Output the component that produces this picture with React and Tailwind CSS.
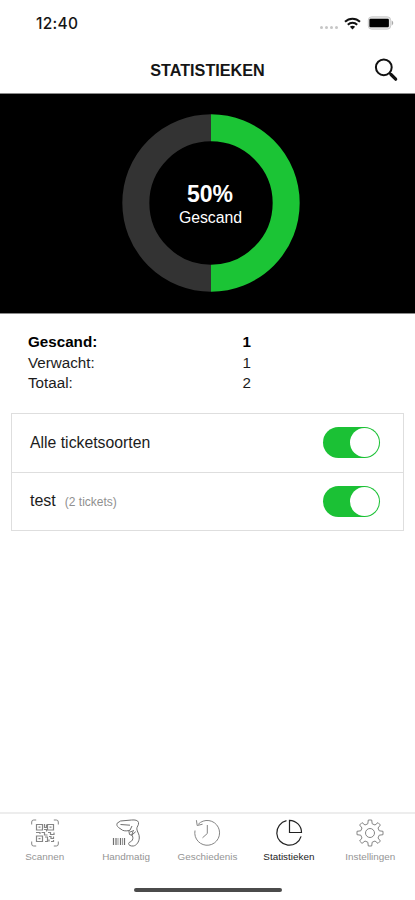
import React from 'react';

const stats = [
  { label: 'Gescand:', value: 1, bold: true },
  { label: 'Verwacht:', value: 1 },
  { label: 'Totaal:', value: 2 },
];

function StatusBar() {
  return (
    <div className="flex h-[46px] items-center pl-[36px] pr-[21px]">
      <span className="pt-[1px] font-[Inter,sans-serif] text-[15.500px] leading-[20px] font-medium tracking-[0.300px] text-[#151515]">12:40</span>
      <div className="ml-auto flex h-4 items-center">
        <div className="mt-[8px] mr-[6px] flex gap-[2px]">
          {[0, 1, 2, 3].map((n) => (
            <i key={n} className="h-[3px] w-[3px] rounded-full bg-[#c6c6c6]" />
          ))}
        </div>
        <svg width="17" height="13" viewBox="0 0 17 13" fill="none" stroke="#111" strokeWidth="2">
          <path d="M1 4.700C5.200.6 11.800.6 16 4.700" />
          <path d="M3.800 7.700c2.700-2.600 6.700-2.600 9.400 0" />
          <path d="M5.900 9.700c1.500-1.400 3.700-1.400 5.200 0L8.500 12.500z" fill="#111" stroke="none" />
        </svg>
        <svg className="ml-[6px]" width="27" height="14" viewBox="0 0 27 14">
          <rect x="1.300" y=".8" width="22.400" height="12.400" rx="3.400" fill="#e4e4e4" stroke="#cecece" />
          <rect x="2.400" y="2.700" width="19.500" height="8.600" rx="1.200" fill="#000" />
          <path d="M24.700 4.600c2 .8 2 4 0 4.800z" fill="#aaa" />
        </svg>
      </div>
    </div>
  );
}

function Donut() {
  return (
    <div className="grid h-[221px] place-items-center border-y border-[#8a8a8a] bg-black pb-[1px] pl-[7px]">
      <div className="grid place-items-center">
        <svg className="col-start-1 row-start-1" width="178" height="178" viewBox="0 0 178 178" fill="none" strokeWidth="27">
          <path d="M89 164.200a75.200 75.200 0 0 1 0-150.400" stroke="#333" />
          <path d="M89 13.800a75.200 75.200 0 0 1 0 150.400" stroke="#1bc435" />
        </svg>
        <div className="col-start-1 row-start-1 mt-[4px] mr-[1px] text-center text-white">
          <div className="mr-[1px] text-[23px] leading-[26px] font-bold">50%</div>
          <div className="text-[15.800px] leading-[22px]">Gescand</div>
        </div>
      </div>
    </div>
  );
}

function Toggle() {
  return (
    <div className="flex h-[31px] w-[57px] items-center justify-end rounded-full bg-[#1bc135] pr-[1px]">
      <span className="h-[29px] w-[29px] rounded-full bg-white" />
    </div>
  );
}

function ScanIcon() {
  return (
    <svg width="28" height="28" viewBox="0 0 28 28" fill="none" stroke="#858585">
      <path d="M.700 5.500V3Q.700 1 2.700 1h2.500M22.800 1h2.500q2 0 2 2v2.500M27.300 22.500V25q0 2-2 2h-2.500M5.200 27H2.700q-2 0-2-2v-2.500" />
      <path strokeWidth="1.200" d="M5.500 5.500h6v5.500h-6zM16.500 5.500h6v5.500h-6zM5.500 17h6v5.500h-6zM7.500 8.200h2M18.500 8.200h2M7.500 19.700h2M13.500 5v3.500h2v-3M13 10.500h2.500v2M5 13.500h4v1.500M10.500 13.500h3v2.500h3M17 13.500h2.500v2H23v-2M14 18h2.500v4.500H14M18 17.500h2v2h2.500v-2M18 22.500v-2M20 22.500h2.500v-1.500" />
    </svg>
  );
}

function ScannerIcon() {
  return (
    <svg width="29" height="28" viewBox="0 0 29 28" fill="none" stroke="#6f6f6f" strokeLinejoin="round">
      <path d="M5.200 4.200 8.500 2 19.500 1c3.500-.3 6.500.2 7 2.500.6 2.600-1.900 4.200-1.700 6.400.2 2.800 2.900 5.400 2.500 9.100-.3 3.800-2.600 7.500-6 8-2.500.3-4.900-.8-4.700-2.500.2-1.600 2.900-1.500 3.800-3.500.9-2.200.5-3.500-.7-5.200" />
      <path d="M5.200 4.200c-.8 1.700-.1 3 1.300 4.300l4 2.700c2.200 1 5.200.8 7.500 0l2-4.200M8.500 5.500l9.500.7M16.800 11.500l.7 4 2.200.7 4-3.500M18 13l4-1.500M19.700 16.200l1.300-3.700" />
      <path d="M1.500 19v7M4 19v7M8.500 19v7M12.500 19v7" strokeWidth="1.200" />
      <path d="M6 19v7M10.500 19v7" strokeWidth=".7" />
    </svg>
  );
}

function HistoryIcon() {
  return (
    <svg width="28" height="28" viewBox="0 0 28 28" fill="none" stroke="#858585">
      <path d="M5.200 5.300A12.400 12.400 0 1 1 2 11.500" />
      <path d="M3.400 1.200 4.200 6.500 9.600 5.200M14.300 6v8.500l-4.800 4.300" />
    </svg>
  );
}

function PieIcon() {
  return (
    <svg width="28" height="28" viewBox="0 0 28 28" fill="none" stroke="#222" strokeWidth="1.200">
      <path d="M11.500 1.700a12.400 12.400 0 1 0 14.600 15.600" />
      <path d="M14.500 1.300v12.200h12A12.200 12.200 0 0 0 14.500 1.300z" />
    </svg>
  );
}

function GearIcon() {
  return (
    <svg width="28" height="28" viewBox="0 0 28 28" fill="none" stroke="#858585" strokeLinejoin="round">
      <circle cx="14" cy="14" r="4.500" />
      <path d="M11.800 4.800 12.300 1h3.400l.5 3.800 2.800 1.200 3-2.400L24.400 6 22 9l1.200 2.800 3.800.5v3.400l-3.800.5L22 19l2.400 3-2.400 2.400-3-2.400-2.800 1.200-.5 3.800h-3.400l-.5-3.800L9 22l-3 2.400L3.600 22 6 19l-1.200-2.800L1 15.700v-3.400l3.800-.5L6 9 3.600 6 6 3.600 9 6z" />
    </svg>
  );
}

const tabs = [
  { label: 'Scannen', Icon: ScanIcon },
  { label: 'Handmatig', Icon: ScannerIcon },
  { label: 'Geschiedenis', Icon: HistoryIcon },
  { label: 'Statistieken', Icon: PieIcon, active: true },
  { label: 'Instellingen', Icon: GearIcon },
];

export default function App() {
  return (
    <div className="flex h-[900px] w-[415px] flex-col bg-white font-['Liberation_Sans',Arial,sans-serif] text-[#1c1c1c]">
      <StatusBar />
      <header className="grid h-[47px] grid-cols-[1fr_auto_1fr] items-center">
        <h1 className="col-start-2 text-[16.200px] leading-[20px] font-bold text-[#151515]">STATISTIEKEN</h1>
        <svg className="mr-[17px] justify-self-end" width="24" height="24" viewBox="0 0 24 24" fill="none" stroke="#111">
          <circle cx="9.800" cy="9.300" r="7.900" strokeWidth="2" />
          <path d="m15.300 14.800 2 2" strokeWidth="2" />
          <path d="m17 16.500 4.700 4.700" strokeWidth="3.200" strokeLinecap="round" />
        </svg>
      </header>
      <Donut />

      <section className="mt-[18px] pl-[28px] text-[15.200px] leading-[20.500px]">
        {stats.map((s) => (
          <div key={s.label} className={s.bold ? 'flex font-bold text-black' : 'flex'}>
            <span className="w-[214.500px]">{s.label}</span>
            <span>{s.value}</span>
          </div>
        ))}
      </section>

      <section className="mx-[11px] mt-[19px] border border-[#dedede]">
        <div className="flex h-[59px] items-center justify-between border-b border-[#dedede] pr-[23px] pl-[18px]">
          <span className="text-[15.800px] leading-[20px]">Alle ticketsoorten</span>
          <Toggle />
        </div>
        <div className="flex h-[57px] items-center justify-between pr-[23px] pl-[18px]">
          <span className="pt-[1px] text-[16px] leading-[20px]">
            test<span className="ml-[9px] text-[12px] text-[#8f8f8f]">(2 tickets)</span>
          </span>
          <Toggle />
        </div>
      </section>

      <nav className="mt-auto h-[88px] border-t-2 border-[#ededed]">
        <div className="grid grid-cols-5 px-[4px] pt-[5px]">
          {tabs.map(({ label, Icon, active }) => (
            <div key={label} className={active ? 'flex flex-col items-center text-[#222]' : 'flex flex-col items-center text-[#949494]'}>
              <Icon />
              <span className="mt-[4px] text-[9.900px] leading-[12px]">{label}</span>
            </div>
          ))}
        </div>
        <div className="mx-auto mt-[25px] h-[4px] w-[148px] rounded-full bg-[#4b4b4b]" />
      </nav>
    </div>
  );
}
